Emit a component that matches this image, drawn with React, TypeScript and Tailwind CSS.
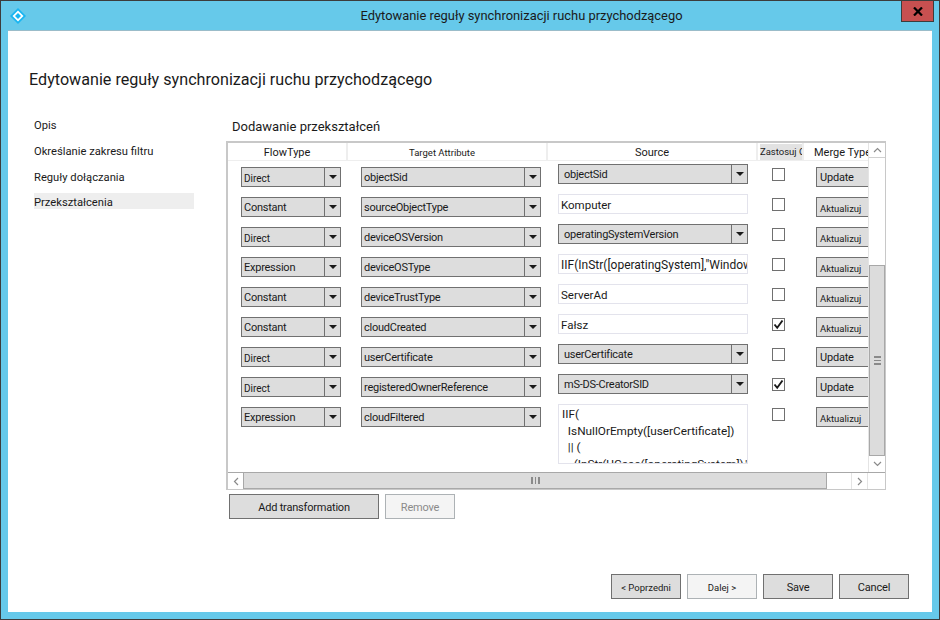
const Caret = () => (
  <svg width="8" height="4" viewBox="0 0 8 4" className="block">
    <path d="M0 0H8L4 4Z" fill="#1a1a1a" />
  </svg>
);

function Combo({ label, width, small }: { label: string; width: string; small?: boolean }) {
  return (
    <div className={`flex h-5 shrink-0 items-stretch border border-[#707070] bg-[#dddddd] ${width}`}>
      <div className={`flex-1 truncate pl-[2px] ${small ? "pt-[2px] text-[10px] leading-[18px]" : "text-[11px] leading-[20px] tracking-[-0.25px]"}`}>{label}</div>
      <div className="flex w-4 items-center justify-center border-l border-[#707070]">
        <Caret />
      </div>
    </div>
  );
}

function SourceCombo({ label }: { label: string }) {
  return (
    <div className="flex h-5 w-[190px] shrink-0 items-stretch border border-[#707070] bg-[#dddddd]">
      <div className="flex-1 truncate pl-[5px] text-[11px] leading-[20px] tracking-[-0.25px]">{label}</div>
      <div className="flex w-4 items-center justify-center border-l border-[#707070]">
        <Caret />
      </div>
    </div>
  );
}

function SourceText({ label }: { label: string }) {
  const long = label.startsWith("IIF");
  return (
    <div className={`h-5 w-[190px] shrink-0 overflow-hidden whitespace-nowrap border border-[#e3e3ec] bg-white pl-[2px] leading-[20px] ${long ? "text-xs" : "text-[11.5px]"}`}>
      {label}
    </div>
  );
}

function Check({ on }: { on?: boolean }) {
  return (
    <div className="mt-1 ml-6 flex h-[13px] w-[13px] shrink-0 items-center justify-center border border-[#707070] bg-white">
      {on && (
        <svg width="11" height="11" viewBox="0 0 11 11" className="shrink-0">
          <path d="M1.5 5.5L4.2 8.8L9.5 1.5" fill="none" stroke="#1a1a1a" strokeWidth="1.9" />
        </svg>
      )}
    </div>
  );
}

function Merge({ label }: { label: string }) {
  const small = label === "Aktualizuj";
  return (
    <div className={`mt-[3px] ml-[31px] h-5 w-[70px] shrink-0 border border-[#707070] bg-[#dddddd] pl-[3px] ${small ? "pt-px text-[9.5px] leading-[19px]" : "text-[11px] leading-[20px] tracking-[-0.2px]"}`}>
      {label}
    </div>
  );
}

type Row = {
  flow: string;
  target: string;
  source: string;
  kind: "combo" | "text";
  on?: boolean;
  merge: string;
};

const rows: Row[] = [
  { flow: "Direct", target: "objectSid", source: "objectSid", kind: "combo", merge: "Update" },
  { flow: "Constant", target: "sourceObjectType", source: "Komputer", kind: "text", merge: "Aktualizuj" },
  { flow: "Direct", target: "deviceOSVersion", source: "operatingSystemVersion", kind: "combo", merge: "Aktualizuj" },
  { flow: "Expression", target: "deviceOSType", source: 'IIF(InStr([operatingSystem],"Windows")>0,"Windows","Unknown")', kind: "text", merge: "Aktualizuj" },
  { flow: "Constant", target: "deviceTrustType", source: "ServerAd", kind: "text", merge: "Aktualizuj" },
  { flow: "Constant", target: "cloudCreated", source: "Fałsz", kind: "text", on: true, merge: "Aktualizuj" },
  { flow: "Direct", target: "userCertificate", source: "userCertificate", kind: "combo", merge: "Update" },
  { flow: "Direct", target: "registeredOwnerReference", source: "mS-DS-CreatorSID", kind: "combo", on: true, merge: "Update" },
];

function GridRow({ row }: { row: Row }) {
  return (
    <div className="flex h-[30px] shrink-0">
      <div className="mt-[3px] ml-[13px] shrink-0">
        <Combo label={row.flow} width="w-[100px]" small={row.flow === "Direct"} />
      </div>
      <div className="mt-[3px] ml-5 shrink-0">
        <Combo label={row.target} width="w-[180px]" />
      </div>
      <div className="ml-[17px] shrink-0">
        {row.kind === "combo" ? <SourceCombo label={row.source} /> : <SourceText label={row.source} />}
      </div>
      <Check on={row.on} />
      <Merge label={row.merge} />
    </div>
  );
}

function Head({ label, width, small }: { label: string; width: string; small?: boolean }) {
  return (
    <div className={`flex h-[18px] shrink-0 items-center justify-center border-r-2 border-[#eeeeee] pt-[2px] ${width} ${small ? "pr-[10px] text-[9.5px]" : "text-[11px]"}`}>
      {label}
    </div>
  );
}

function VScroll() {
  return (
    <div className="flex w-[17px] shrink-0 flex-col border-l border-[#e4e4e4] bg-white">
      <div className="flex h-[15px] items-center justify-center border-b border-[#d0d0d0]">
        <svg width="9" height="6" viewBox="0 0 9 6"><path d="M1 5L4.5 1.5L8 5" fill="none" stroke="#8a8a8a" strokeWidth="1.2" /></svg>
      </div>
      <div className="h-[107px]" />
      <div className="flex h-[191px] items-center justify-center border border-[#a8a8a8] bg-[#dcdcdc]">
        <div className="h-[9px] w-[7px] border-y-2 border-[#8a8a8a] bg-[linear-gradient(#8a8a8a,#8a8a8a)] bg-[length:100%_1px] bg-center bg-no-repeat" />
      </div>
      <div className="flex h-[16px] items-center justify-center">
        <svg width="9" height="6" viewBox="0 0 9 6"><path d="M1 1L4.5 4.5L8 1" fill="none" stroke="#8a8a8a" strokeWidth="1.2" /></svg>
      </div>
    </div>
  );
}

function HScroll() {
  return (
    <div className="flex h-[17px] items-stretch border-t border-[#a8a8a8]">
      <div className="flex w-4 items-center justify-center border-r border-[#a8a8a8]">
        <svg width="6" height="9" viewBox="0 0 6 9"><path d="M5 1L1.5 4.5L5 8" fill="none" stroke="#8a8a8a" strokeWidth="1.2" /></svg>
      </div>
      <div className="flex w-[583px] items-center justify-center border-b border-r border-[#a8a8a8] bg-[#dcdcdc]">
        <div className="h-[7px] w-[9px] border-x-2 border-[#8a8a8a] bg-[linear-gradient(#8a8a8a,#8a8a8a)] bg-[length:1px_100%] bg-center bg-no-repeat" />
      </div>
      <div className="w-6" />
      <div className="flex w-4 items-center justify-center border-l border-[#e4e4e4]">
        <svg width="6" height="9" viewBox="0 0 6 9"><path d="M1 1L4.5 4.5L1 8" fill="none" stroke="#8a8a8a" strokeWidth="1.2" /></svg>
      </div>
      <div className="flex-1 border-l border-[#e4e4e4]" />
    </div>
  );
}

function Grid() {
  return (
    <div className="flex h-[349px] w-[660px] flex-col border-2 border-b border-r border-[#c8c8c8] bg-white">
      <div className="flex min-h-0 flex-1">
        <div className="flex min-w-0 flex-1 flex-col overflow-hidden">
          <div className="flex h-[18px] shrink-0 border-b border-[#eeeeee]">
            <Head label="FlowType" width="w-[120px]" />
            <Head label="Target Attribute" width="w-[200px]" small />
            <Head label="Source" width="w-[210px]" />
            <div className="flex h-[18px] w-[46px] shrink-0 items-center overflow-hidden border-r-2 border-[#eeeeee] pl-[2px] text-[9.5px] whitespace-nowrap">
              <span className="bg-[#e2e2e2] pt-px pr-px">Zastosuj O</span>
            </div>
            <div className="flex h-[18px] shrink-0 items-center overflow-hidden pt-[2px] pl-[10px] text-[11px] whitespace-nowrap">Merge Type</div>
          </div>
          <div className="flex flex-1 flex-col overflow-hidden pt-[3px]">
            {rows.map((row) => (
              <GridRow key={row.target} row={row} />
            ))}
            <div className="flex h-[60px] shrink-0">
              <div className="mt-[3px] ml-[13px] shrink-0">
                <Combo label="Expression" width="w-[100px]" />
              </div>
              <div className="mt-[3px] ml-5 shrink-0">
                <Combo label="cloudFiltered" width="w-[180px]" />
              </div>
              <div className="ml-[17px] h-[60px] w-[190px] shrink-0 overflow-hidden whitespace-pre border border-[#e3e3ec] pt-px pl-[3px] text-[11.8px] leading-[16.5px]">
                {"IIF(\n  IsNullOrEmpty([userCertificate])\n  || (\n    (InStr(UCase([operatingSystem]),\"WINDOWS\")"}
              </div>
              <Check />
              <Merge label="Aktualizuj" />
            </div>
          </div>
        </div>
        <VScroll />
      </div>
      <HScroll />
    </div>
  );
}

function Btn({ label, width, small, off, dim }: { label: string; width: string; small?: boolean; off?: boolean; dim?: boolean }) {
  return (
    <button
      className={`h-[25px] border ${width} ${small ? "pt-1 text-[9.5px]" : "pt-[3px] text-[11px] tracking-[-0.2px]"} ${
        off ? "border-[#adb2b5] bg-[#f4f4f4]" : "border-[#707070] bg-[#dddddd]"
      } ${dim ? "text-[#8a8a8a]" : ""}`}
    >
      {label}
    </button>
  );
}

export default function App() {
  const nav = ["Opis", "Określanie zakresu filtru", "Reguły dołączania", "Przekształcenia"];
  return (
    <div className="flex h-[620px] w-[940px] flex-col border border-[#3c3c3c] bg-[#66c9ea] font-['Roboto',sans-serif] text-[#1a1a1a]">
      <div className="relative flex h-[29px] shrink-0 items-center">
        <svg width="16" height="16" viewBox="0 0 16 16" className="ml-[9px] mt-px">
          <path d="M8 0L16 8L8 16L0 8Z" fill="#19b5f1" />
          <path d="M8 2.5L13.5 8L8 13.5L2.5 8Z" fill="#ffffff" />
          <path d="M8 5L11 8L8 11L5 8Z" fill="#19b5f1" />
        </svg>
        <div className="flex-1 pl-[78px] text-center text-[12.9px]">Edytowanie reguły synchronizacji ruchu przychodzącego</div>
        <div className="absolute top-0 right-[5px] flex h-[21px] w-[33px] items-center justify-center border border-t-0 border-[#3c3c3c] bg-[#c75050]">
          <svg width="10" height="9" viewBox="0 0 10 9">
            <path d="M1 .5L9 8.5M9 .5L1 8.5" stroke="#000000" strokeWidth="2.2" />
          </svg>
        </div>
      </div>

      <div className="mx-[7px] mb-[7px] flex flex-1 flex-col border-t border-[#9bbcc9] bg-white pl-[21px]">
        <h1 className="mt-[38px] h-[22px] text-[16.15px] leading-[22px]">Edytowanie reguły synchronizacji ruchu przychodzącego</h1>
        <div className="mt-[25px] flex">
          <div className="flex w-[191px] shrink-0 flex-col pl-[5px] pt-px">
            {nav.map((item, i) => (
              <div key={item} className={`h-4 w-40 text-[11.2px] ${i === 2 ? "mb-2" : "mb-[10px]"} ${i === 3 ? "bg-[#eeeeee] leading-5" : "leading-[18px]"}`}>
                {item}
              </div>
            ))}
          </div>
          <div className="flex flex-col pt-[3px] pl-[6px]">
            <div className="h-4 pl-[6px] text-[13px] leading-4">Dodawanie przekształceń</div>
            <div className="mt-[6px]">
              <Grid />
            </div>
            <div className="mt-1 flex gap-[6px] pl-[3px]">
              <Btn label="Add transformation" width="w-[150px]" />
              <Btn label="Remove" width="w-[70px]" off dim />
            </div>
          </div>
        </div>
        <div className="mt-[55px] flex justify-end gap-[6px] pr-[23px]">
          <Btn label="< Poprzedni" width="w-[70px]" small />
          <Btn label="Dalej >" width="w-[70px]" small off />
          <Btn label="Save" width="w-[70px]" />
          <Btn label="Cancel" width="w-[70px]" />
        </div>
      </div>
    </div>
  );
}
